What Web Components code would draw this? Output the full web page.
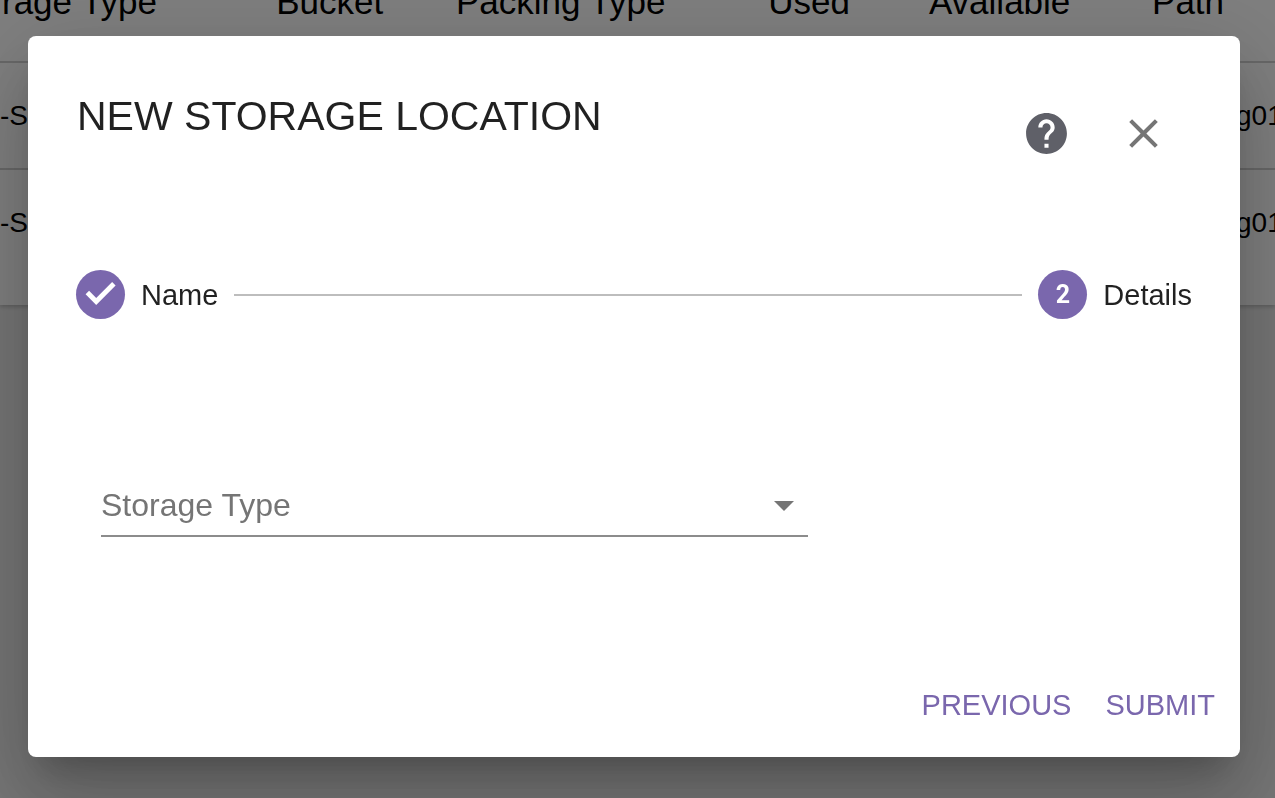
<!DOCTYPE html>
<html lang="en">
<head>
  <meta charset="utf-8">
  <meta name="viewport" content="width=device-width, initial-scale=1">
  <title>Storage Locations</title>
  <style>
    body {
      margin: 0;
      height: 100vh;
      overflow: hidden;
      background: #ececec;
      color: rgba(0, 0, 0, 0.87);
      font-family: "Liberation Sans", Arial, sans-serif;
    }
  </style>
</head>
<body>
  <location-table></location-table>
  <modal-dialog heading="NEW STORAGE LOCATION">
    <step-list>
      <step-item label="Name" done></step-item>
      <step-item label="Details" number="2"></step-item>
    </step-list>
    <select-field label="Storage Type"></select-field>
    <text-button slot="actions">PREVIOUS</text-button>
    <text-button slot="actions">SUBMIT</text-button>
  </modal-dialog>

  <script>
    class LocationTable extends HTMLElement {
      constructor() {
        super();
        this.shadowDOM = this.attachShadow({ mode: 'open' });
      }

      connectedCallback() {
        this.render();
      }

      render() {
        const row = `<tr><td>-S</td><td></td><td></td><td></td><td></td><td class="path">g01</td></tr>`;
        this.shadowDOM.innerHTML = `
          <style>
            :host {
              display: flow-root;
              overflow: hidden;
              color: #000;
            }
            /* the list is scrolled a little under the top edge */
            .card {
              margin: -19px 0 48px;
              padding-bottom: 30px;
              background: #fff;
              box-shadow: 0 2px 4px rgba(0, 0, 0, 0.2);
            }
            table {
              width: 100%;
              table-layout: fixed;
              border-collapse: collapse;
              white-space: nowrap;
            }
            th {
              padding: 0 0 38px 2px;
              border-bottom: 2px solid #d0d0d0;
              font-size: 35px;
              font-weight: 400;
              line-height: 42px;
              text-align: left;
            }
            td {
              height: 105px;
              padding: 0;
              border-bottom: 2px solid #d0d0d0;
              font-size: 28px;
            }
            tr:last-child td {
              border-bottom: 0;
            }
            .path {
              padding-left: 86px;
            }
          </style>
          <div class="card">
            <table>
              <colgroup>
                <col style="width:21.5%">
                <col style="width:14.1%">
                <col style="width:24.5%">
                <col style="width:12.6%">
                <col style="width:17.5%">
                <col>
              </colgroup>
              <thead>
                <tr>
                  <th>rage Type</th><th>Bucket</th><th>Packing Type</th>
                  <th>Used</th><th>Available</th><th>Path</th>
                </tr>
              </thead>
              <tbody>${row}${row}</tbody>
            </table>
          </div>
        `;
      }
    }

    class ModalDialog extends HTMLElement {
      constructor() {
        super();
        this.shadowDOM = this.attachShadow({ mode: 'open' });
      }

      connectedCallback() {
        this.heading = this.getAttribute('heading') || '';
        this.render();
      }

      render() {
        this.shadowDOM.innerHTML = `
          <style>
            :host {
              position: fixed;
              inset: 0;
              display: flex;
              box-sizing: border-box;
              padding: 36px 35px 41px 28px;
              background: rgba(0, 0, 0, 0.5);
            }
            .dialog {
              flex: 1;
              display: flex;
              flex-direction: column;
              border-radius: 8px;
              background: #fff;
              box-shadow: 0 22px 30px -14px rgba(0, 0, 0, 0.2),
                          0 48px 76px 6px rgba(0, 0, 0, 0.14),
                          0 18px 92px 16px rgba(0, 0, 0, 0.12);
            }
            header {
              display: flex;
              align-items: flex-start;
              padding: 49px 48px 0 49px;
            }
            h2 {
              flex: 1;
              margin: 0;
              font-size: 41px;
              font-weight: 400;
              line-height: 62px;
            }
            header button {
              display: flex;
              padding: 24px;
              border: 0;
              background: none;
              color: #757575;
            }
            header .help {
              color: #5f6068;
            }
            svg {
              width: 49px;
              height: 49px;
              fill: currentColor;
            }
            .content {
              flex: 1;
            }
            footer {
              display: flex;
              justify-content: flex-end;
              padding: 16px 8px;
            }
          </style>
          <section class="dialog" role="dialog" aria-labelledby="title">
            <header>
              <h2 id="title">${this.heading}</h2>
              <button class="help" type="button" aria-label="Help">
                <svg viewBox="0 0 24 24"><path d="M12 2C6.48 2 2 6.48 2 12s4.48 10 10 10 10-4.48 10-10S17.52 2 12 2zm1 17h-2v-2h2v2zm2.07-7.75l-.9.92C13.45 12.9 13 13.5 13 15h-2v-.5c0-1.1.45-2.1 1.17-2.83l1.24-1.26c.37-.36.59-.86.59-1.41 0-1.1-.9-2-2-2s-2 .9-2 2H8c0-2.21 1.79-4 4-4s4 1.79 4 4c0 .88-.36 1.68-.93 2.25z"/></svg>
              </button>
              <button type="button" aria-label="Close">
                <svg viewBox="0 0 24 24"><path d="M19 6.41L17.59 5 12 10.59 6.41 5 5 6.41 10.59 12 5 17.59 6.41 19 12 13.41 17.59 19 19 17.59 13.41 12z"/></svg>
              </button>
            </header>
            <div class="content"><slot></slot></div>
            <footer><slot name="actions"></slot></footer>
          </section>
        `;
      }
    }

    class StepList extends HTMLElement {
      constructor() {
        super();
        this.shadowDOM = this.attachShadow({ mode: 'open' });
      }

      connectedCallback() {
        this.shadowDOM.innerHTML = `
          <style>
            :host {
              display: flex;
              align-items: center;
              padding: 88px 48px 0;
            }
            ::slotted(step-item:not(:last-child)) {
              flex: 1;
            }
          </style>
          <slot></slot>
        `;
      }
    }

    class StepItem extends HTMLElement {
      constructor() {
        super();
        this.shadowDOM = this.attachShadow({ mode: 'open' });
      }

      connectedCallback() {
        this.label = this.getAttribute('label') || '';
        this.number = this.getAttribute('number') || '';
        this.done = this.hasAttribute('done');
        this.render();
      }

      render() {
        const mark = this.done
          ? `<svg viewBox="0 0 24 24"><path d="M9.9 17.1l-5.2-5.2 1.7-1.7 3.5 3.5 7.8-7.8 1.7 1.7z"/></svg>`
          : this.number;
        this.shadowDOM.innerHTML = `
          <style>
            :host {
              display: flex;
              align-items: center;
              gap: 16px;
            }
            .mark {
              display: flex;
              align-items: center;
              justify-content: center;
              width: 49px;
              height: 49px;
              border-radius: 50%;
              background: #7a67ad;
              color: #fff;
              font: 700 25px Roboto, sans-serif;
            }
            svg {
              width: 49px;
              height: 49px;
              fill: currentColor;
            }
            .label {
              font-size: 29px;
              line-height: 40px;
            }
            .line {
              flex: 1;
              height: 2px;
              margin-right: 16px;
              background: #bdbdbd;
            }
          </style>
          <span class="mark">${mark}</span>
          <span class="label">${this.label}</span>
          ${this.done ? '<span class="line"></span>' : ''}
        `;
      }
    }

    class SelectField extends HTMLElement {
      constructor() {
        super();
        this.shadowDOM = this.attachShadow({ mode: 'open' });
      }

      connectedCallback() {
        this.label = this.getAttribute('label') || '';
        this.shadowDOM.innerHTML = `
          <style>
            :host {
              display: grid;
              align-items: center;
              width: calc(100% * 7 / 12);
              margin: 154px 0 0 73px;
              color: #757575;
              font-size: 32px;
            }
            /* label, select and arrow share one cell */
            label, select, svg {
              grid-area: 1 / 1;
            }
            label, svg {
              pointer-events: none;
              z-index: 1;
            }
            select {
              appearance: none;
              width: 100%;
              height: 64px;
              border: 0;
              border-bottom: 2px solid #8c8c8c;
              border-radius: 0;
              background: none;
              font: inherit;
            }
            svg {
              justify-self: end;
              width: 48px;
              height: 48px;
              fill: currentColor;
            }
          </style>
          <label for="field">${this.label}</label>
          <select id="field"><option value=""></option></select>
          <svg viewBox="0 0 24 24"><path d="M7 10l5 5 5-5z"/></svg>
        `;
      }
    }

    class TextButton extends HTMLElement {
      constructor() {
        super();
        this.shadowDOM = this.attachShadow({ mode: 'open' });
      }

      connectedCallback() {
        this.shadowDOM.innerHTML = `
          <style>
            :host {
              display: block;
            }
            button {
              height: 72px;
              padding: 0 17px;
              border: 0;
              background: none;
              color: #7a67ad;
              font-family: inherit;
              font-size: 29px;
            }
          </style>
          <button type="button"><slot></slot></button>
        `;
      }
    }

    customElements.define('location-table', LocationTable);
    customElements.define('modal-dialog', ModalDialog);
    customElements.define('step-list', StepList);
    customElements.define('step-item', StepItem);
    customElements.define('select-field', SelectField);
    customElements.define('text-button', TextButton);
  </script>
</body>
</html>
